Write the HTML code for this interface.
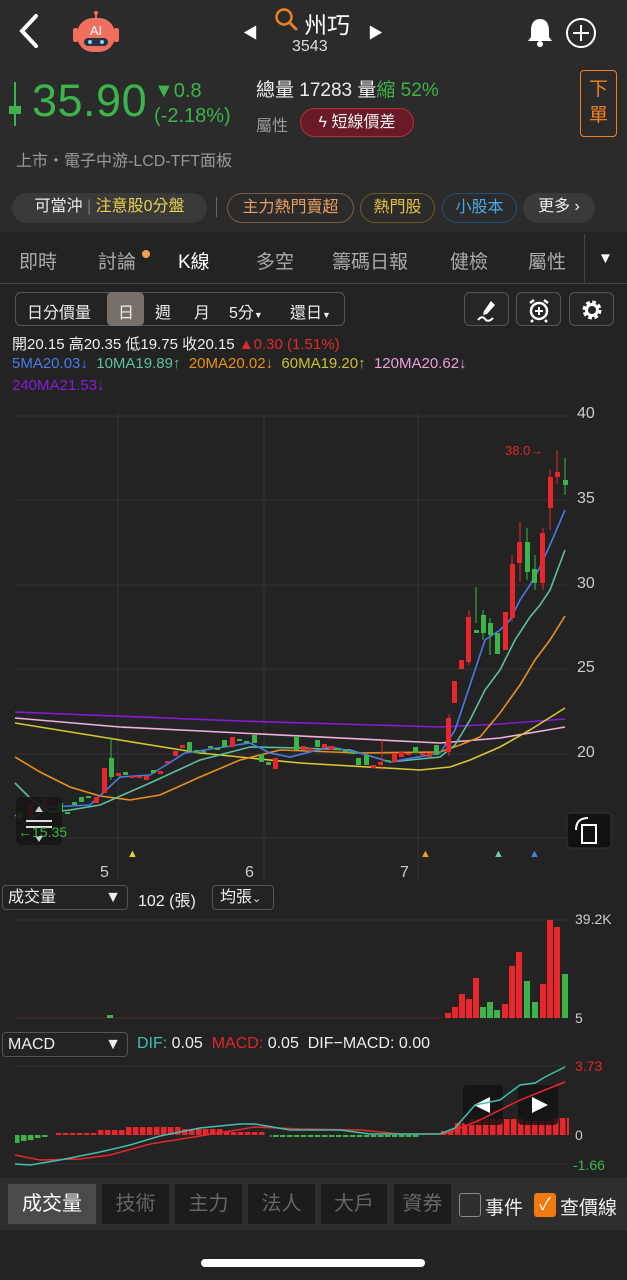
<!DOCTYPE html>
<html><head><meta charset="utf-8"><style>
*{margin:0;padding:0;box-sizing:border-box}
body{width:627px;height:1280px;background:#232323;font-family:"Liberation Sans","Noto Sans CJK TC",sans-serif;color:#ddd;position:relative;overflow:hidden}
.a{position:absolute;white-space:nowrap}
.hdr{position:absolute;left:0;top:0;width:627px;height:232px;background:#2b2b2b}
.chip{position:absolute;top:193px;height:30px;border-radius:15px;font-size:16px;line-height:28px;text-align:center}
.tab{position:absolute;top:247px;font-size:19px;color:#aaa}
.bt{position:absolute;top:1184px;height:40px;background:#1c1c1c;color:#666;font-size:20px;line-height:40px;text-align:center}
.ib{position:absolute;top:292px;width:45px;height:34px;border:1px solid #555;border-radius:6px;background:#262626}
.ax{position:absolute;font-size:16px;color:#ccc}
</style></head><body>
<div class="hdr"></div>
<svg class="a" style="left:16px;top:12px" width="28" height="38"><path d="M20 4 L6 19 L20 34" stroke="#fff" stroke-width="4" fill="none" stroke-linecap="round"/></svg>
<svg class="a" style="left:70px;top:10px" width="52" height="44"><line x1="26" y1="2" x2="26" y2="9" stroke="#f07060" stroke-width="2"/><circle cx="26" cy="3" r="2" fill="#f07060"/><rect x="3" y="18" width="5" height="14" rx="2" fill="#f07060"/><rect x="44" y="18" width="5" height="14" rx="2" fill="#f07060"/><rect x="7" y="8" width="38" height="34" rx="16" fill="#f07060"/><rect x="14" y="28" width="24" height="8" rx="4" fill="#2a3040"/><circle cx="20" cy="32" r="2" fill="#8cf"/><circle cx="32" cy="32" r="2" fill="#8cf"/><text x="26" y="25" font-size="13" fill="#fff" text-anchor="middle" font-family="Liberation Sans">AI</text></svg>
<div class="a" style="left:243px;top:22px;font-size:15px;color:#fff">◀</div>
<svg class="a" style="left:274px;top:7px" width="26" height="26"><circle cx="10" cy="10" r="7.5" stroke="#f08020" stroke-width="2.5" fill="none"/><line x1="15.5" y1="15.5" x2="22" y2="22" stroke="#f08020" stroke-width="2.8" stroke-linecap="round"/></svg>
<div class="a" style="left:304px;top:6px;font-size:23px;color:#fff">州巧</div>
<div class="a" style="left:368px;top:22px;font-size:15px;color:#fff">▶</div>
<div class="a" style="left:292px;top:38px;font-size:16px;color:#ddd">3543</div>
<svg class="a" style="left:524px;top:16px" width="32" height="32"><path d="M16 3 C9 3 7 9 7 15 L7 21 L4 25 L28 25 L25 21 L25 15 C25 9 23 3 16 3Z" fill="#fff"/><circle cx="16" cy="28" r="3" fill="#fff"/></svg>
<svg class="a" style="left:564px;top:16px" width="34" height="34"><circle cx="17" cy="17" r="14" stroke="#fff" stroke-width="2" fill="none"/><path d="M17 9V25M9 17H25" stroke="#fff" stroke-width="2"/></svg>
<svg class="a" style="left:8px;top:82px" width="14" height="44"><line x1="7" y1="0" x2="7" y2="44" stroke="#3cb44a" stroke-width="2"/><rect x="1" y="24" width="12" height="8" fill="#3cb44a"/></svg>
<div class="a" style="left:32px;top:75px;font-size:45px;color:#3cb44a;letter-spacing:0.5px">35.90</div>
<div class="a" style="left:154px;top:80px;font-size:20px;color:#3cb44a">▼0.8</div>
<div class="a" style="left:154px;top:105px;font-size:20px;color:#3cb44a">(-2.18%)</div>
<div class="a" style="left:256px;top:75px;font-size:19px;color:#eee">總量 17283 量<span style="color:#3cb44a">縮 52%</span></div>
<div class="a" style="left:256px;top:112px;font-size:16px;color:#999">屬性</div>
<div class="a" style="left:300px;top:108px;width:114px;height:29px;border-radius:15px;background:#6a1a26;border:1px solid #b03040;font-size:16px;color:#eee;line-height:27px;text-align:center">ϟ 短線價差</div>
<div class="a" style="left:580px;top:70px;width:37px;height:67px;border:1.5px solid #f08020;border-radius:4px;color:#f08020;font-size:19px;line-height:26px;text-align:center;padding-top:6px;white-space:normal">下<br>單</div>
<div class="a" style="left:16px;top:147px;font-size:16px;color:#999">上市・電子中游-LCD-TFT面板</div>
<div class="chip" style="left:12px;width:195px;background:#3a3a3a;color:#eee">可當沖<span style="color:#777"> | </span><span style="color:#e8d050">注意股0分盤</span></div>
<div class="a" style="left:216px;top:197px;width:1px;height:20px;background:#666"></div>
<div class="chip" style="left:227px;width:127px;border:1px solid #7a5a40;color:#e8a060">主力熱門賣超</div>
<div class="chip" style="left:360px;width:75px;border:1px solid #6a5a20;color:#e8c040">熱門股</div>
<div class="chip" style="left:442px;width:75px;border:1px solid #20507a;color:#4aa8e8">小股本</div>
<div class="chip" style="left:523px;width:72px;background:#3a3a3a;color:#eee">更多 ›</div>
<div class="a" style="left:0;top:283px;width:627px;height:1px;background:#444"></div>
<div class="a" style="left:584px;top:234px;width:1px;height:49px;background:#444"></div>
<div class="tab" style="left:19px">即時</div>
<div class="tab" style="left:98px">討論</div><div class="a" style="left:142px;top:250px;width:8px;height:8px;border-radius:4px;background:#f0a050"></div>
<div class="tab" style="left:178px;color:#fff">K線</div>
<div class="tab" style="left:256px">多空</div>
<div class="tab" style="left:332px">籌碼日報</div>
<div class="tab" style="left:450px">健檢</div>
<div class="tab" style="left:528px">屬性</div>
<div class="a" style="left:598px;top:250px;font-size:15px;color:#fff">▼</div>
<div class="a" style="left:15px;top:292px;width:330px;height:34px;border:1px solid #555;border-radius:6px"></div>
<div class="a" style="left:107px;top:292px;width:37px;height:34px;background:#77706a;border-radius:5px"></div>
<div class="a" style="left:27px;top:299px;font-size:16px;color:#eee">日分價量</div>
<div class="a" style="left:118px;top:299px;font-size:16px;color:#eee">日</div>
<div class="a" style="left:155px;top:299px;font-size:16px;color:#eee">週</div>
<div class="a" style="left:194px;top:299px;font-size:16px;color:#eee">月</div>
<div class="a" style="left:229px;top:299px;font-size:16px;color:#eee">5分<span style="font-size:9px">▼</span></div>
<div class="a" style="left:290px;top:299px;font-size:16px;color:#eee">還日<span style="font-size:9px">▼</span></div>
<div class="ib" style="left:464px"><svg width="45" height="34"><path d="M26 8 L30 12 L22 21 L18 22 L19 18Z" fill="#fff"/><path d="M13 27 Q17 22 20 26 T28 25" stroke="#fff" stroke-width="2" fill="none"/></svg></div>
<div class="ib" style="left:516px"><svg width="45" height="34"><circle cx="22" cy="18" r="8" stroke="#fff" stroke-width="2.5" fill="none"/><path d="M22 14V22M18 18H26" stroke="#fff" stroke-width="2"/><path d="M13 10 L17 7M31 10 L27 7M16 27 L14 29M28 27 L30 29" stroke="#fff" stroke-width="2.5"/></svg></div>
<div class="ib" style="left:569px"><svg width="45" height="34"><circle cx="22" cy="17" r="7" stroke="#fff" stroke-width="5" stroke-dasharray="3.3 2.2" fill="none"/><circle cx="22" cy="17" r="5.5" stroke="#fff" stroke-width="3" fill="none"/></svg></div>
<div class="a" style="left:12px;top:333px;font-size:15px;color:#eee">開20.15 高20.35 低19.75 收20.15 <span style="color:#e02a2a">▲0.30 (1.51%)</span></div>
<div class="a" style="left:12px;top:355px;font-size:15px"><span style="color:#4a7ae8">5MA20.03↓</span>&nbsp; <span style="color:#5cc0a0">10MA19.89↑</span>&nbsp; <span style="color:#e8901a">20MA20.02↓</span>&nbsp; <span style="color:#c8c030">60MA19.20↑</span>&nbsp; <span style="color:#e8a0d8">120MA20.62↓</span></div>
<div class="a" style="left:12px;top:377px;font-size:15px;color:#8a1ad8">240MA21.53↓</div>
<svg class="a" style="left:0;top:0" width="627" height="1280">
<defs><pattern id="rb" width="7" height="40" patternUnits="userSpaceOnUse"><rect x="0" y="0" width="5.5" height="40" fill="#e8262c"/></pattern><pattern id="gb" width="7" height="40" patternUnits="userSpaceOnUse"><rect x="0" y="0" width="5.5" height="40" fill="#3cb44a"/></pattern></defs>
<g stroke="#333" stroke-width="1">
<line x1="15" y1="416" x2="567" y2="416"/><line x1="15" y1="500" x2="567" y2="500"/><line x1="15" y1="585" x2="567" y2="585"/><line x1="15" y1="669" x2="567" y2="669"/><line x1="15" y1="754" x2="567" y2="754"/><line x1="15" y1="838" x2="567" y2="838"/>
<line x1="118" y1="412" x2="118" y2="880"/><line x1="264" y1="412" x2="264" y2="880"/><line x1="418" y1="412" x2="418" y2="880"/>
<line x1="15" y1="920" x2="567" y2="920"/><line x1="15" y1="1066" x2="567" y2="1066"/><line x1="15" y1="1164" x2="567" y2="1164"/>
</g>
<g fill="none" stroke-width="1.6">
<polyline stroke="#8a1ad8" points="15,712 240,721 440,727 500,724 565,719"/>
<polyline stroke="#f0b0e0" points="15,718 120,727 240,733 440,743 500,738 565,727"/>
<polyline stroke="#d8c830" points="15,723 120,740 200,753 300,763 420,770 450,767 470,760 500,747 530,730 565,708"/>
<polyline stroke="#e8901a" points="15,757 40,772 70,787 100,796 130,800 160,795 200,777 240,760 280,750 360,753 440,752 460,745 480,737 500,713 520,685 535,660 550,640 565,616"/>
<polyline stroke="#5cc0a0" points="15,783 30,798 50,812 70,810 100,805 150,783 200,760 250,747 300,748 350,750 390,762 440,757 455,745 470,720 485,690 500,670 515,640 530,617 540,605 550,590 565,550"/>
<polyline stroke="#4a7ae8" points="15,815 25,823 50,807 90,805 120,777 150,775 185,753 250,743 270,753 290,757 330,747 360,753 390,762 440,753 455,730 465,700 475,670 485,640 500,630 510,620 520,600 530,585 540,567 550,545 565,510"/>
</g>
<g fill="#e8262c">
<rect x="28" y="803" width="5" height="14"/><rect x="42" y="798" width="5" height="10"/><rect x="51" y="800" width="5" height="2"/><rect x="94" y="797" width="5" height="6"/><rect x="102" y="768" width="5" height="25"/><rect x="116" y="773" width="5" height="3"/><rect x="130" y="776" width="5" height="2"/><rect x="137" y="776" width="5" height="2"/><rect x="144" y="776" width="5" height="4"/><rect x="158" y="771" width="5" height="3"/><rect x="165" y="761" width="5" height="2"/><rect x="173" y="751" width="5" height="5"/><rect x="180" y="745" width="5" height="3"/><rect x="230" y="737" width="5" height="10"/><rect x="273" y="758" width="5" height="11"/><rect x="301" y="746" width="5" height="4"/><rect x="308" y="748" width="5" height="3"/><rect x="322" y="744" width="5" height="4"/><rect x="329" y="746" width="5" height="4"/><rect x="371" y="765" width="5" height="3"/><rect x="378" y="762" width="5" height="3"/><rect x="392" y="753" width="5" height="9"/><rect x="399" y="752" width="5" height="5"/><rect x="406" y="753" width="5" height="2"/><rect x="420" y="753" width="5" height="2"/><rect x="427" y="753" width="5" height="4"/>
<rect x="446" y="718" width="5" height="34"/><rect x="452" y="681" width="5" height="22"/><rect x="459" y="660" width="5" height="9"/><rect x="466" y="617" width="5" height="45"/><rect x="503" y="612" width="5" height="38"/><rect x="510" y="564" width="5" height="54"/><rect x="517" y="542" width="5" height="21"/><rect x="540" y="533" width="5" height="50"/><rect x="548" y="477" width="5" height="31"/><rect x="555" y="472" width="5" height="5"/>
</g>
<g stroke="#e8262c" stroke-width="1"><line x1="449" y1="714" x2="449" y2="756"/><line x1="469" y1="610" x2="469" y2="665"/><line x1="512" y1="555" x2="512" y2="622"/><line x1="520" y1="522" x2="520" y2="582"/><line x1="543" y1="528" x2="543" y2="590"/><line x1="550" y1="470" x2="550" y2="530"/><line x1="557" y1="450" x2="557" y2="484"/><line x1="382" y1="740" x2="382" y2="770"/></g>
<g fill="#3cb44a">
<rect x="18" y="812" width="5" height="6"/><rect x="58" y="803" width="5" height="9"/><rect x="65" y="812" width="5" height="2"/><rect x="72" y="802" width="5" height="3"/><rect x="79" y="797" width="5" height="5"/><rect x="86" y="796" width="5" height="2"/><rect x="109" y="758" width="5" height="19"/><rect x="123" y="772" width="5" height="3"/><rect x="151" y="770" width="5" height="3"/><rect x="187" y="742" width="5" height="9"/><rect x="194" y="750" width="5" height="3"/><rect x="201" y="751" width="5" height="2"/><rect x="208" y="746" width="5" height="2"/><rect x="215" y="748" width="5" height="2"/><rect x="222" y="740" width="5" height="7"/><rect x="237" y="739" width="5" height="2"/><rect x="244" y="741" width="5" height="2"/><rect x="252" y="735" width="5" height="8"/><rect x="259" y="754" width="5" height="8"/><rect x="266" y="762" width="5" height="3"/><rect x="294" y="736" width="5" height="14"/><rect x="315" y="740" width="5" height="7"/><rect x="336" y="748" width="5" height="2"/><rect x="343" y="750" width="5" height="2"/><rect x="350" y="752" width="5" height="2"/><rect x="356" y="758" width="5" height="7"/><rect x="364" y="755" width="5" height="10"/><rect x="385" y="760" width="5" height="2"/><rect x="413" y="747" width="5" height="6"/><rect x="434" y="745" width="5" height="10"/>
<rect x="474" y="630" width="5" height="3"/><rect x="481" y="615" width="5" height="18"/><rect x="488" y="623" width="5" height="12"/><rect x="495" y="633" width="5" height="21"/><rect x="525" y="542" width="5" height="30"/><rect x="532" y="569" width="5" height="14"/><rect x="563" y="480" width="5" height="5"/>
</g>
<g stroke="#3cb44a" stroke-width="1"><line x1="111" y1="737" x2="111" y2="780"/><line x1="476" y1="587" x2="476" y2="623"/><line x1="483" y1="610" x2="483" y2="640"/><line x1="490" y1="618" x2="490" y2="655"/><line x1="527" y1="528" x2="527" y2="580"/><line x1="535" y1="555" x2="535" y2="590"/><line x1="565" y1="458" x2="565" y2="495"/></g>
<text x="505" y="455" font-size="13" fill="#e02a2a" font-family="Liberation Sans">38.0→</text>
<g font-size="11"><text x="127" y="857" fill="#e8d030">▲</text><text x="420" y="857" fill="#f0a020">▲</text><text x="493" y="857" fill="#6cc8a8">▲</text><text x="529" y="857" fill="#4a7ae8">▲</text></g>
<line x1="15" y1="1018" x2="440" y2="1018" stroke="#5a2a2a" stroke-width="1"/>
<g fill="#e8262c"><rect x="445" y="1013" width="6" height="5"/><rect x="452" y="1007" width="6" height="11"/><rect x="459" y="994" width="6" height="24"/><rect x="466" y="999" width="6" height="19"/><rect x="473" y="978" width="6" height="40"/><rect x="502" y="1004" width="6" height="14"/><rect x="509" y="966" width="6" height="52"/><rect x="516" y="952" width="6" height="66"/><rect x="540" y="984" width="6" height="34"/><rect x="547" y="920" width="6" height="98"/><rect x="554" y="927" width="6" height="91"/></g>
<g fill="#3cb44a"><rect x="480" y="1007" width="6" height="11"/><rect x="487" y="1002" width="6" height="16"/><rect x="494" y="1010" width="6" height="8"/><rect x="524" y="981" width="6" height="37"/><rect x="532" y="1002" width="6" height="16"/><rect x="562" y="974" width="6" height="44"/><rect x="107" y="1015" width="6" height="3"/></g>
<g fill="url(#gb)"><rect x="15" y="1135" width="6" height="8"/><rect x="21" y="1135" width="6" height="6"/><rect x="28" y="1135" width="6" height="5"/><rect x="35" y="1135" width="6" height="3"/><rect x="42" y="1135" width="6" height="2"/><rect x="270" y="1135" width="150" height="2"/></g>
<g fill="url(#rb)"><rect x="56" y="1133" width="42" height="2"/><rect x="98" y="1130" width="28" height="5"/><rect x="126" y="1127" width="56" height="8"/><rect x="182" y="1129" width="42" height="6"/><rect x="224" y="1132" width="42" height="3"/><rect x="441" y="1131" width="14" height="4"/><rect x="455" y="1123" width="14" height="12"/><rect x="469" y="1119" width="56" height="16"/><rect x="525" y="1121" width="28" height="14"/><rect x="553" y="1118" width="16" height="17"/></g>
<rect x="463" y="1085" width="40" height="40" rx="4" fill="#111" opacity="0.8"/><rect x="518" y="1085" width="40" height="40" rx="4" fill="#111" opacity="0.8"/>
<path d="M490 1097 L474 1105 L490 1113Z" fill="#fff"/><path d="M532 1097 L548 1105 L532 1113Z" fill="#fff"/>
<polyline fill="none" stroke="#e8262c" stroke-width="1.5" points="15,1155 40,1160 80,1159 110,1155 150,1144 200,1136 255,1127 300,1129 360,1130 400,1134 445,1134 480,1120 520,1100 565,1082"/>
<polyline fill="none" stroke="#40c0b0" stroke-width="1.5" points="15,1164 30,1165 60,1160 100,1152 130,1145 160,1136 200,1128 240,1124 255,1124 290,1130 340,1130 370,1134 440,1134 455,1128 475,1105 500,1100 520,1085 535,1083 545,1077 565,1067"/>
<rect x="16" y="797" width="46" height="48" rx="5" fill="#161616" opacity="0.9"/>
<path d="M26 821H52M26 827H52" stroke="#ddd" stroke-width="2"/><path d="M39 806 L35 812 H43Z M39 842 L35 836 H43Z" fill="#ccc"/>
<text x="18" y="837" font-size="14" fill="#3cb44a" font-family="Liberation Sans">←15.35</text>
<rect x="567" y="813" width="44" height="35" rx="4" fill="#111" stroke="#333"/>
<rect x="582" y="825" width="14" height="18" fill="none" stroke="#fff" stroke-width="2"/><path d="M576 830 Q576 818 588 818" stroke="#fff" stroke-width="2" fill="none"/>
</svg>
<div class="ax" style="left:577px;top:405px">40</div><div class="ax" style="left:577px;top:490px">35</div><div class="ax" style="left:577px;top:575px">30</div><div class="ax" style="left:577px;top:659px">25</div><div class="ax" style="left:577px;top:744px">20</div>
<div class="ax" style="left:100px;top:864px">5</div><div class="ax" style="left:245px;top:864px">6</div><div class="ax" style="left:400px;top:864px">7</div>
<div class="a" style="left:2px;top:885px;width:126px;height:25px;border:1px solid #555;border-radius:4px;font-size:16px;color:#eee;line-height:23px;padding-left:5px">成交量<span style="position:absolute;right:6px">▼</span></div>
<div class="a" style="left:138px;top:887px;font-size:16px;color:#eee">102 (張)</div>
<div class="a" style="left:212px;top:885px;width:62px;height:25px;border:1px solid #555;border-radius:4px;font-size:16px;color:#eee;line-height:23px;padding-left:7px">均張<span style="font-size:11px">⌄</span></div>
<div class="a" style="left:575px;top:911px;font-size:14px;color:#ccc">39.2K</div><div class="a" style="left:575px;top:1010px;font-size:14px;color:#ccc">5</div>
<div class="a" style="left:2px;top:1032px;width:126px;height:25px;border:1px solid #555;border-radius:4px;font-size:16px;color:#eee;line-height:23px;padding-left:5px">MACD<span style="position:absolute;right:6px">▼</span></div>
<div class="a" style="left:137px;top:1035px;font-size:16px;color:#eee"><span style="color:#40c0b0">DIF:</span> 0.05&nbsp; <span style="color:#e0262c">MACD:</span> 0.05&nbsp; DIF−MACD: 0.00</div>
<div class="a" style="left:575px;top:1058px;font-size:14px;color:#e0262c">3.73</div><div class="a" style="left:575px;top:1127px;font-size:14px;color:#ccc">0</div><div class="a" style="left:573px;top:1157px;font-size:14px;color:#3cb44a">-1.66</div>
<div class="a" style="left:0;top:1178px;width:627px;height:52px;background:#2e2e2e"></div>
<div class="bt" style="left:8px;width:88px;background:#4a4a4a;color:#fff">成交量</div>
<div class="bt" style="left:102px;width:67px">技術</div><div class="bt" style="left:175px;width:67px">主力</div><div class="bt" style="left:248px;width:67px">法人</div><div class="bt" style="left:321px;width:66px">大戶</div><div class="bt" style="left:394px;width:57px">資券</div>
<div class="a" style="left:459px;top:1193px;width:22px;height:24px;border:1.5px solid #888;border-radius:3px"></div>
<div class="a" style="left:485px;top:1193px;font-size:19px;color:#eee">事件</div>
<div class="a" style="left:534px;top:1193px;width:22px;height:24px;background:#f07a10;border-radius:3px;color:#fff;font-size:17px;text-align:center;line-height:24px">✓</div>
<div class="a" style="left:560px;top:1193px;font-size:19px;color:#eee">查價線</div>
<div class="a" style="left:201px;top:1259px;width:224px;height:8px;border-radius:4px;background:#fff"></div>
</body></html>
